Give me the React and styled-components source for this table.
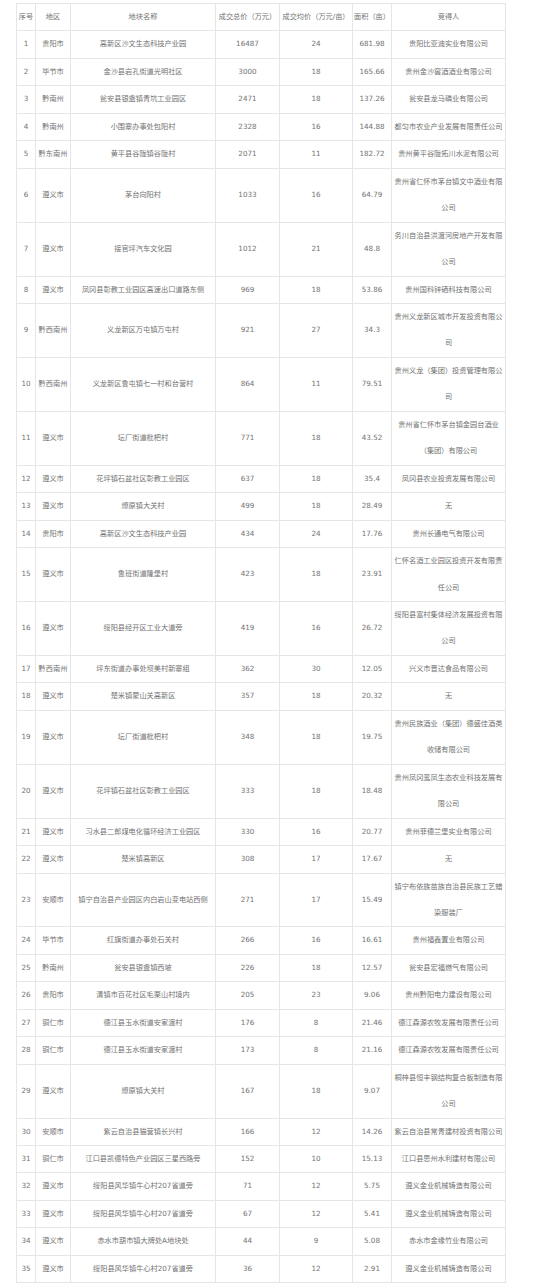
import React from "react";
import styled, { createGlobalStyle } from "styled-components";

const Global = createGlobalStyle`
  html, body { margin: 0; padding: 0; background: #fff; }
`;

const Page = styled.div`
  padding: 3px 0 0 16px;
  font-family: "DejaVu Sans", "Noto Sans CJK SC", sans-serif;
`;

const Table = styled.table`
  border-collapse: collapse;
  table-layout: fixed;
  width: 489px;
  font-size: 7.2px;
  color: #727272;
`;

const Cell = styled.td`
  border: 1px solid #e6e6e6;
  padding: 0 1px;
  line-height: 26.46px;
  text-align: center;
  vertical-align: middle;
  white-space: nowrap;
  overflow: hidden;
`;

const Head = styled(Cell).attrs({ as: "th" })`
  font-weight: normal;
`;

const widths = [19, 35, 145, 64, 73, 39, 114];
const headers = ["序号", "地区", "地块名称", "成交总价（万元）", "成交均价（万元/亩）", "面积（亩）", "竞得人"];

const rows = [
  ["贵阳市", "高新区沙文生态科技产业园", "16487", "24", "681.98", ["贵阳比亚迪实业有限公司"]],
  ["毕节市", "金沙县岩孔街道光明社区", "3000", "18", "165.66", ["贵州金沙窖酒酒业有限公司"]],
  ["黔南州", "瓮安县银盏镇青坑工业园区", "2471", "18", "137.26", ["瓮安县龙马磷业有限公司"]],
  ["黔南州", "小围寨办事处包阳村", "2328", "16", "144.88", ["都匀市农业产业发展有限责任公司"]],
  ["黔东南州", "黄平县谷陇镇谷陇村", "2071", "11", "182.72", ["贵州黄平谷陇拓川水泥有限公司"]],
  ["遵义市", "茅台向阳村", "1033", "16", "64.79", ["贵州省仁怀市茅台镇文中酒业有限", "公司"]],
  ["遵义市", "接官坪汽车文化园", "1012", "21", "48.8", ["务川自治县洪渡河房地产开发有限", "公司"]],
  ["遵义市", "凤冈县彰教工业园区高速出口道路东侧", "969", "18", "53.86", ["贵州国科锌硒科技有限公司"]],
  ["黔西南州", "义龙新区万屯镇万屯村", "921", "27", "34.3", ["贵州义龙新区城市开发投资有限公", "司"]],
  ["黔西南州", "义龙新区鲁屯镇七一村和台营村", "864", "11", "79.51", ["贵州义龙（集团）投资管理有限公", "司"]],
  ["遵义市", "坛厂街道枇杷村", "771", "18", "43.52", ["贵州省仁怀市茅台镇金园台酒业", "（集团）有限公司"]],
  ["遵义市", "花坪镇石盆社区彰教工业园区", "637", "18", "35.4", ["凤冈县农业投资发展有限公司"]],
  ["遵义市", "燎原镇大关村", "499", "18", "28.49", ["无"]],
  ["贵阳市", "高新区沙文生态科技产业园", "434", "24", "17.76", ["贵州长通电气有限公司"]],
  ["遵义市", "鲁班街道隆堡村", "423", "18", "23.91", ["仁怀名酒工业园区投资开发有限责", "任公司"]],
  ["遵义市", "绥阳县经开区工业大道旁", "419", "16", "26.72", ["绥阳县富村集体经济发展投资有限", "公司"]],
  ["黔西南州", "坪东街道办事处坝美村新寨组", "362", "30", "12.05", ["兴义市晋达食品有限公司"]],
  ["遵义市", "楚米镇蒙山关高新区", "357", "18", "20.32", ["无"]],
  ["遵义市", "坛厂街道枇杷村", "348", "18", "19.75", ["贵州民族酒业（集团）德盛佳酒类", "收储有限公司"]],
  ["遵义市", "花坪镇石盆社区彰教工业园区", "333", "18", "18.48", ["贵州凤冈鸾凤生态农业科技发展有", "限公司"]],
  ["遵义市", "习水县二郎煤电化循环经济工业园区", "330", "16", "20.77", ["贵州菲德兰堡实业有限公司"]],
  ["遵义市", "楚米镇高新区", "308", "17", "17.67", ["无"]],
  ["安顺市", "镇宁自治县产业园区内白岩山变电站西侧", "271", "17", "15.49", ["镇宁布依族苗族自治县民族工艺蜡", "染服装厂"]],
  ["毕节市", "红旗街道办事处石关村", "266", "16", "16.61", ["贵州福鑫置业有限公司"]],
  ["黔南州", "瓮安县银盏镇西坡", "226", "18", "12.57", ["瓮安县宏福燃气有限公司"]],
  ["贵阳市", "清镇市百花社区毛栗山村境内", "205", "23", "9.06", ["贵州黔阳电力建设有限公司"]],
  ["铜仁市", "德江县玉水街道安家渡村", "176", "8", "21.46", ["德江森源农牧发展有限责任公司"]],
  ["铜仁市", "德江县玉水街道安家渡村", "173", "8", "21.16", ["德江森源农牧发展有限责任公司"]],
  ["遵义市", "燎原镇大关村", "167", "18", "9.07", ["桐梓县恒丰钢结构复合板制造有限", "公司"]],
  ["安顺市", "紫云自治县猫营镇长兴村", "166", "12", "14.26", ["紫云自治县常青建材投资有限公司"]],
  ["铜仁市", "江口县凯德特色产业园区三星西路旁", "152", "10", "15.13", ["江口县思州水利建材有限公司"]],
  ["遵义市", "绥阳县风华镇牛心村207省道旁", "71", "12", "5.75", ["遵义金业机械铸造有限公司"]],
  ["遵义市", "绥阳县风华镇牛心村207省道旁", "67", "12", "5.41", ["遵义金业机械铸造有限公司"]],
  ["遵义市", "赤水市葫市镇大牌处A地块处", "44", "9", "5.08", ["赤水市金缘竹业有限公司"]],
  ["遵义市", "绥阳县风华镇牛心村207省道旁", "36", "12", "2.91", ["遵义金业机械铸造有限公司"]],
];

export default function App() {
  return (
    <Page>
      <Global />
      <Table>
        <colgroup>
          {widths.map((w, i) => (
            <col key={i} style={{ width: w }} />
          ))}
        </colgroup>
        <thead>
          <tr>
            {headers.map((h) => (
              <Head key={h}>{h}</Head>
            ))}
          </tr>
        </thead>
        <tbody>
          {rows.map((r, i) => (
            <tr key={i}>
              <Cell>{i + 1}</Cell>
              <Cell>{r[0]}</Cell>
              <Cell>{r[1]}</Cell>
              <Cell>{r[2]}</Cell>
              <Cell>{r[3]}</Cell>
              <Cell>{r[4]}</Cell>
              <Cell>
                {r[5].map((line, j) => (
                  <React.Fragment key={j}>
                    {j > 0 && <br />}
                    {line}
                  </React.Fragment>
                ))}
              </Cell>
            </tr>
          ))}
        </tbody>
      </Table>
    </Page>
  );
}
